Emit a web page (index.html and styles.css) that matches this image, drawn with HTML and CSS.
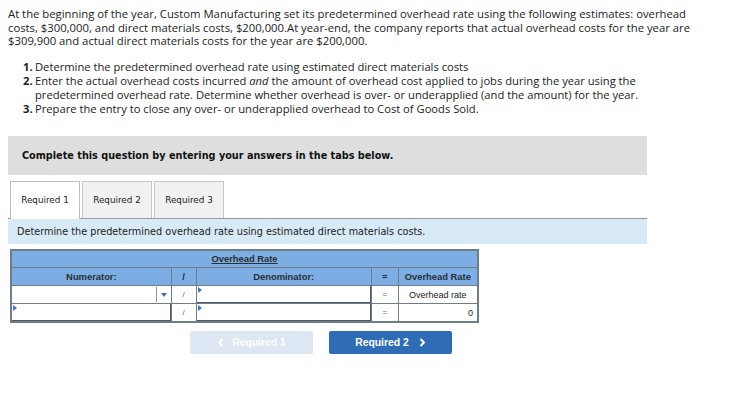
FILE: index.html
```html
<!DOCTYPE html>
<html lang="en">
<head>
  <meta charset="UTF-8">
  <title>Overhead Rate</title>
  <link rel="stylesheet" href="styles.css">
</head>
<body>
  <p class="intro">At the beginning of the year, Custom Manufacturing set its predetermined overhead rate using the following estimates: overhead costs, $300,000, and direct materials costs, $200,000.At year-end, the company reports that actual overhead costs for the year are $309,900 and actual direct materials costs for the year are $200,000.</p>
  <ol class="steps">
    <li><b>1.</b> <span>Determine the predetermined overhead rate using estimated direct materials costs</span></li>
    <li><b>2.</b> <span>Enter the actual overhead costs incurred <i>and</i> the amount of overhead cost applied to jobs during the year using the predetermined overhead rate. Determine whether overhead is over- or underapplied (and the amount) for the year.</span></li>
    <li><b>3.</b> <span>Prepare the entry to close any over- or underapplied overhead to Cost of Goods Sold.</span></li>
  </ol>
  <div class="notice">Complete this question by entering your answers in the tabs below.</div>
  <div class="tabs">
    <div class="tab active">Required 1</div>
    <div class="tab">Required 2</div>
    <div class="tab">Required 3</div>
  </div>
  <div class="instr">Determine the predetermined overhead rate using estimated direct materials costs.</div>
  <table class="rate">
    <tr class="head">
      <th colspan="5"><u>Overhead Rate</u></th>
    </tr>
    <tr class="head">
      <th class="c-num">Numerator:</th>
      <th class="c-op">/</th>
      <th class="c-den">Denominator:</th>
      <th class="c-op2">=</th>
      <th class="c-res">Overhead Rate</th>
    </tr>
    <tr>
      <td class="field select"><div class="sel"><span class="arrow"></span></div></td>
      <td class="op">/</td>
      <td class="field"><div class="box"><span class="mark"></span></div></td>
      <td class="op">=</td>
      <td class="res center">Overhead rate</td>
    </tr>
    <tr>
      <td class="field"><div class="box"><span class="mark"></span></div></td>
      <td class="op">/</td>
      <td class="field"><div class="box"><span class="mark"></span></div></td>
      <td class="op">=</td>
      <td class="res right">0</td>
    </tr>
  </table>
  <div class="nav">
    <button class="btn prev">
      <svg class="chev" width="7" height="9" viewBox="0 0 7 9"><path d="M5.5 1 L2 4.5 L5.5 8" fill="none" stroke="#fff" stroke-width="2"/></svg>
      Required 1
    </button>
    <button class="btn next">
      Required 2
      <svg class="chev" width="7" height="9" viewBox="0 0 7 9"><path d="M1.5 1 L5 4.5 L1.5 8" fill="none" stroke="#fff" stroke-width="2"/></svg>
    </button>
  </div>
</body>
</html>
```

FILE: styles.css
```css
* { box-sizing: border-box; }
body { margin: 0; padding: 7px 8px; font-family: 'Open Sans', 'Noto Sans', sans-serif; color: #222; background: #fff; }

.intro { margin: 0; font-size: 11.3px; line-height: 13.5px; width: 692px; }

.steps { list-style: none; margin: 12px 0 0; padding: 0 0 0 15px; font-size: 11.2px; line-height: 14px; width: 650px; }
.steps li { display: flex; gap: 3px; }
.steps b { font-weight: 700; flex: none; width: 9px; }

.notice {
  margin-top: 20px; width: 639px; height: 39px;
  background: #dedede; padding: 0 14px;
  font-family: 'DejaVu Sans', Verdana, sans-serif; font-size: 9.7px; font-weight: 700; color: #111;
  display: flex; align-items: center;
}

.tabs { display: flex; gap: 2px; margin: 6px 0 0 2px; height: 37px; }
.tab {
  width: 70px; height: 37px; display: flex; align-items: center; justify-content: center;
  font-family: 'DejaVu Sans', Verdana, sans-serif; font-size: 8.8px; color: #222;
  background: #f1f1f1; border: 1px solid #c8c8c8; border-bottom: none;
}
.tab.active { background: #fff; border-color: #bdbdbd; height: 38px; position: relative; z-index: 1; }

.instr {
  width: 639px; height: 26px; background: #d9eaf7; border-top: 1px solid #9a9a9a;
  font-family: 'DejaVu Sans', Verdana, sans-serif; font-size: 9.7px; color: #222;
  padding: 0 9px; display: flex; align-items: center;
}

.rate {
  margin: 5px 0 0 2px; border-collapse: collapse; width: 469px;
  font-family: 'Liberation Sans', Arial, sans-serif; font-size: 9.4px; color: #222;
  border: 2px solid #6f7c89;
}
.rate th, .rate td { border: 1px solid #6f7c89; height: 18px; padding: 0; }
.rate .head th { background: #7daee3; font-weight: 700; color: #262f38; text-align: center; }
.c-num { width: 161px; }
.c-op { width: 25px; }
.c-den { width: 176px; }
.c-op2 { width: 27px; }
.c-res { width: 80px; }
.rate td.op { text-align: center; color: #666; font-size: 8px; background: #fff; }
.rate td.res { background: #fff; padding: 0 4px; font-size: 9px; }
.rate td.center { text-align: center; }
.rate td.right { text-align: right; }
.rate td.field { background: #fff; position: relative; }
.rate td.select { border: 1px dotted #333; }
.sel { height: 17px; position: relative; }
.sel::after { content: ''; position: absolute; right: 14px; top: 1px; bottom: 1px; border-left: 1px solid #8896a6; }
.arrow { position: absolute; right: 4px; top: 7px; border-left: 3px solid transparent; border-right: 3px solid transparent; border-top: 4px solid #4a6da0; }
.box { height: 17px; position: relative; border-right: 1px solid #4e5964; border-bottom: 1px solid #4e5964; }
.mark { position: absolute; left: 1px; top: 1px; border-top: 3px solid transparent; border-bottom: 3px solid transparent; border-left: 4px solid #3f78c4; }

.nav { display: flex; gap: 16px; margin: 8px 0 0 182px; }
.btn {
  width: 123px; height: 23px; border: none; border-radius: 2px;
  display: flex; align-items: center; justify-content: center; gap: 8px;
  font-family: 'Liberation Sans', Arial, sans-serif; font-size: 10.4px; font-weight: 700; color: #fff;
}
.btn.prev { background: #dce7f3; color: #fff; }
.btn.next { background: #2e6cb5; gap: 10px; }
.chev { display: block; }
```
